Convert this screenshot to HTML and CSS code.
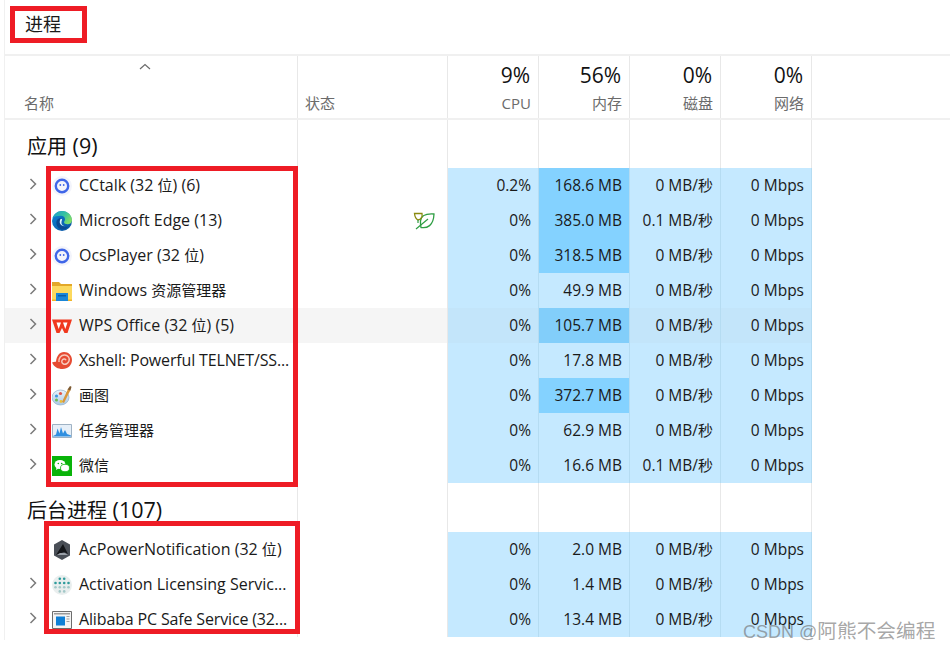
FILE: index.html
```html
<!DOCTYPE html>
<html lang="zh">
<head>
<meta charset="utf-8">
<title>进程</title>
<link rel="stylesheet" href="styles.css">
</head>
<body>
<svg class="defs" width="0" height="0" aria-hidden="true">
  <defs>
    <linearGradient id="edgeTop" x1="0" y1="0" x2="1" y2=".5"><stop offset="0" stop-color="#1c9bd0"/><stop offset=".6" stop-color="#35c3a0"/><stop offset="1" stop-color="#7ddc6a"/></linearGradient>
    <linearGradient id="edgeLow" x1="0" y1="0" x2="1" y2="1"><stop offset="0" stop-color="#0f86d6"/><stop offset="1" stop-color="#0a4f9e"/></linearGradient>
    <linearGradient id="paintBody" x1="0" y1="0" x2="0" y2="1"><stop offset="0" stop-color="#eaf3fb"/><stop offset="1" stop-color="#a9c9e6"/></linearGradient>
    <symbol id="cc" viewBox="0 0 20 20"><circle cx="10" cy="10" r="10" fill="#f3f4fb"/><circle cx="10" cy="10" r="6.200" fill="none" stroke="#3f66e8" stroke-width="2.400"/><circle cx="8.300" cy="9" r=".9" fill="#3f66e8"/><circle cx="11.700" cy="9" r=".9" fill="#3f66e8"/></symbol>
    <symbol id="chev" viewBox="0 0 8 12"><path d="M1.500 1l5 5-5 5"/></symbol>
  </defs>
</svg>
<div class="app">
  <h1 class="title">进程</h1>
  <div class="table">
    <div class="row head">
      <div class="cell name-h"><svg class="sort" viewBox="0 0 12 7"><path d="M1 6l5-4.500L11 6"/></svg><span class="zh">名称</span></div>
      <div class="cell status-h"><span class="zh">状态</span></div>
      <div class="cell metric"><b>9%</b><span>CPU</span></div>
      <div class="cell metric"><b>56%</b><span class="zh">内存</span></div>
      <div class="cell metric"><b>0%</b><span class="zh">磁盘</span></div>
      <div class="cell metric"><b>0%</b><span class="zh">网络</span></div>
    </div>

    <div class="row group first"><div class="cell name"><span class="group-label"><span class="zh">应用</span> (9)</span></div><div class="cell"></div><div class="cell"></div><div class="cell"></div><div class="cell"></div><div class="cell"></div></div>

    <div class="row proc">
      <div class="cell name"><svg class="chev"><use href="#chev"/></svg>
        <svg class="icon"><use href="#cc"/></svg>
        <span class="label">CCtalk (32 <span class="zh">位</span>) (6)</span></div>
      <div class="cell"></div><div class="cell num heat">0.2%</div><div class="cell num heat hot">168.6 MB</div><div class="cell num heat">0 MB/<span class="zh">秒</span></div><div class="cell num heat">0 Mbps</div>
    </div>
    <div class="row proc">
      <div class="cell name"><svg class="chev"><use href="#chev"/></svg>
        <svg class="icon" viewBox="0 0 20 20"><circle cx="10" cy="10" r="10" fill="url(#edgeLow)"/><path d="M.6 7C2 2.800 5.700 0 10 0c6 0 10 4.300 10 9.500 0 2.300-2 3.700-4.500 3.700-2 0-3.500-.8-3.500-2 0-1 1-1.400 1-2.900C13 6 11.300 4.800 9 4.800 5.500 4.800 2 5.500.6 7z" fill="url(#edgeTop)"/><path d="M8.500 7c-3 .3-4.500 3-4 6 .5 3 3 5.500 6 5.500 2.500 0 4.500-1.300 5.500-3-3 .8-6 .2-7-2-1-2-.5-4.700-.5-6.500z" fill="#0a4a94"/><path d="M8.500 8c-1 2-1.200 4 .2 5.600 1 1 2.500 1.500 4 1.600-2.500-.6-3.700-2.600-3.200-4.500.2-1 .7-1.800.5-2.700z" fill="#dff3fb"/></svg>
        <span class="label">Microsoft Edge (13)</span></div>
      <div class="cell status"><svg class="leaf" viewBox="0 0 22 18"><path d="M8 15.500C14 16.500 20.500 14 21 2 14 1.500 8 3 7.500 9c-.1 2 0 4.500.5 6.500z" fill="none" stroke="#2f9e44" stroke-width="1.300"/><path d="M1.500 1.500H9c.5 3-.5 6-4 6.500-2-1-3.200-3.500-3.500-6.500z" fill="none" stroke="#8a8a10" stroke-width="1.300"/><path d="M3 17L15 7M5 8v3" fill="none" stroke="#2f9e44" stroke-width="1.200"/></svg></div>
      <div class="cell num heat">0%</div><div class="cell num heat hot">385.0 MB</div><div class="cell num heat">0.1 MB/<span class="zh">秒</span></div><div class="cell num heat">0 Mbps</div>
    </div>
    <div class="row proc">
      <div class="cell name"><svg class="chev"><use href="#chev"/></svg>
        <svg class="icon"><use href="#cc"/></svg>
        <span class="label">OcsPlayer (32 <span class="zh">位</span>)</span></div>
      <div class="cell"></div><div class="cell num heat">0%</div><div class="cell num heat hot">318.5 MB</div><div class="cell num heat">0 MB/<span class="zh">秒</span></div><div class="cell num heat">0 Mbps</div>
    </div>
    <div class="row proc">
      <div class="cell name"><svg class="chev"><use href="#chev"/></svg>
        <svg class="icon" viewBox="0 0 20 20"><path d="M0 1h7l2 2h11v4H0z" fill="#e3a828"/><path d="M0 5h20v15H0z" fill="#fcd95e"/><path d="M0 18.500h20V20H0z" fill="#f0b429"/><path d="M4 12h12v8H4z" fill="#1a86d8"/><path d="M6 14h8v1.500H6z" fill="#0b5ea8"/></svg>
        <span class="label">Windows <span class="zh">资源管理器</span></span></div>
      <div class="cell"></div><div class="cell num heat">0%</div><div class="cell num heat">49.9 MB</div><div class="cell num heat">0 MB/<span class="zh">秒</span></div><div class="cell num heat">0 Mbps</div>
    </div>
    <div class="row proc hover">
      <div class="cell name"><svg class="chev"><use href="#chev"/></svg>
        <svg class="icon" viewBox="0 0 20 20"><path d="M0 3.500h20L15.500 17H12.500L10 12l-2.500 5H4.500z" fill="#f0381e"/><path d="M4.500 6.500L6.700 13 9 6.500zM11 6.500L13.300 13 15.500 6.500z" fill="#fff"/></svg>
        <span class="label">WPS Office (32 <span class="zh">位</span>) (5)</span></div>
      <div class="cell"></div><div class="cell num heat">0%</div><div class="cell num heat hot">105.7 MB</div><div class="cell num heat">0 MB/<span class="zh">秒</span></div><div class="cell num heat">0 Mbps</div>
    </div>
    <div class="row proc">
      <div class="cell name"><svg class="chev"><use href="#chev"/></svg>
        <svg class="icon" viewBox="0 0 20 20"><path d="M0 11.500c1.500-.8 3-1 4-.8C4.500 5 7.500 1 12 1c4.500 0 8 3.500 8 8 0 5-4 9-9.500 9C6 18 2 16 0 11.500z" fill="#e64b32"/><path d="M7 11c-.5-4 2-7 5.500-7S18 7 17 10c-.8 2.500-3.500 3.800-5.500 3-1.800-.7-2.300-3-1-4.300 1-1 3-.8 3.500.5" fill="none" stroke="#f8c9bb" stroke-width="1.500"/></svg>
        <span class="label tight">Xshell: Powerful TELNET/SS...</span></div>
      <div class="cell"></div><div class="cell num heat">0%</div><div class="cell num heat">17.8 MB</div><div class="cell num heat">0 MB/<span class="zh">秒</span></div><div class="cell num heat">0 Mbps</div>
    </div>
    <div class="row proc">
      <div class="cell name"><svg class="chev"><use href="#chev"/></svg>
        <svg class="icon" viewBox="0 0 20 20"><ellipse cx="8.500" cy="11.500" rx="8.500" ry="7.500" fill="url(#paintBody)" stroke="#8fb0cc" stroke-width=".7"/><circle cx="4.500" cy="10" r="1.600" fill="#3f9adf"/><circle cx="8.500" cy="7.500" r="1.600" fill="#e0574a"/><circle cx="4.500" cy="14" r="1.500" fill="#6cbb4e"/><circle cx="9" cy="15.500" r="1.400" fill="#e9c23c"/><path d="M10 16L16 3l2.500 1L12 17z" fill="#d9963a"/><path d="M15.500 3.500L18 0l1.500.7L18.500 4.500z" fill="#7d5a32"/></svg>
        <span class="label"><span class="zh">画图</span></span></div>
      <div class="cell"></div><div class="cell num heat">0%</div><div class="cell num heat hot">372.7 MB</div><div class="cell num heat">0 MB/<span class="zh">秒</span></div><div class="cell num heat">0 Mbps</div>
    </div>
    <div class="row proc">
      <div class="cell name"><svg class="chev"><use href="#chev"/></svg>
        <svg class="icon" viewBox="0 0 20 20"><path d="M.5 3.500h19v13H.5z" fill="#e6eff8" stroke="#9fb2c4"/><path d="M1 15l3-1.500 1.500-6 2 5L9 6l2 6.500 2-3.500 2 4 4 1.500v1H1z" fill="#2f8fe0"/></svg>
        <span class="label"><span class="zh">任务管理器</span></span></div>
      <div class="cell"></div><div class="cell num heat">0%</div><div class="cell num heat">62.9 MB</div><div class="cell num heat">0 MB/<span class="zh">秒</span></div><div class="cell num heat">0 Mbps</div>
    </div>
    <div class="row proc">
      <div class="cell name"><svg class="chev"><use href="#chev"/></svg>
        <svg class="icon" viewBox="0 0 20 20"><path d="M0 0h20v20H0z" fill="#09b309"/><ellipse cx="8" cy="8.500" rx="5.500" ry="4.500" fill="#fff"/><path d="M4.500 11.500L4 14l2.500-1.500z" fill="#fff"/><ellipse cx="13" cy="12" rx="4.500" ry="3.700" fill="#fff" stroke="#09b309" stroke-width=".8"/><circle cx="6.300" cy="7.500" r=".8" fill="#09b309"/><circle cx="9.700" cy="7.500" r=".8" fill="#09b309"/></svg>
        <span class="label"><span class="zh">微信</span></span></div>
      <div class="cell"></div><div class="cell num heat">0%</div><div class="cell num heat">16.6 MB</div><div class="cell num heat">0.1 MB/<span class="zh">秒</span></div><div class="cell num heat">0 Mbps</div>
    </div>

    <div class="row group"><div class="cell name"><span class="group-label"><span class="zh">后台进程</span> (107)</span></div><div class="cell"></div><div class="cell"></div><div class="cell"></div><div class="cell"></div><div class="cell"></div></div>

    <div class="row proc">
      <div class="cell name"><span class="chev-space"></span>
        <svg class="icon" viewBox="0 0 20 20"><path d="M10 0l8 4.500v11L10 20l-8-4.500v-11z" fill="#4a4f57"/><path d="M4 15L11 4l5 10-4-2z" fill="#14161a"/><path d="M5 15h11l-3-2H8z" fill="#9aa0a8"/></svg>
        <span class="label">AcPowerNotification (32 <span class="zh">位</span>)</span></div>
      <div class="cell"></div><div class="cell num heat">0%</div><div class="cell num heat">2.0 MB</div><div class="cell num heat">0 MB/<span class="zh">秒</span></div><div class="cell num heat">0 Mbps</div>
    </div>
    <div class="row proc">
      <div class="cell name"><svg class="chev"><use href="#chev"/></svg>
        <svg class="icon" viewBox="0 0 20 20"><circle cx="10" cy="10" r="10" fill="#e9eeee"/><g fill="#2f9c9c"><circle cx="7.800" cy="3.800" r="1.300"/><circle cx="12.200" cy="3.800" r="1.300"/><circle cx="3.500" cy="8" r="1.300"/><circle cx="7.800" cy="8" r="1.300"/><circle cx="12.200" cy="8" r="1.300"/><circle cx="16.500" cy="8" r="1.300"/></g><g fill="#a3c8c8"><circle cx="3.500" cy="12.200" r="1.300"/><circle cx="7.800" cy="12.200" r="1.300"/><circle cx="12.200" cy="12.200" r="1.300"/><circle cx="16.500" cy="12.200" r="1.300"/><circle cx="7.800" cy="16.400" r="1.300"/><circle cx="12.200" cy="16.400" r="1.300"/></g></svg>
        <span class="label">Activation Licensing Servic...</span></div>
      <div class="cell"></div><div class="cell num heat">0%</div><div class="cell num heat">1.4 MB</div><div class="cell num heat">0 MB/<span class="zh">秒</span></div><div class="cell num heat">0 Mbps</div>
    </div>
    <div class="row proc">
      <div class="cell name"><svg class="chev"><use href="#chev"/></svg>
        <svg class="icon" viewBox="0 0 20 20"><path d="M.5 1.500h19v17H.5z" fill="#f4f4f4" stroke="#6d6d6d"/><path d="M2 3h16v1.500H2z" fill="#9a9a9a"/><path d="M4 6.500h9v9H4z" fill="#0e7fd6"/><path d="M14.500 6.500h3M14.500 9h3M14.500 11.500h3" stroke="#a0a0a0"/></svg>
        <span class="label tight">Alibaba PC Safe Service (32...</span></div>
      <div class="cell"></div><div class="cell num heat">0%</div><div class="cell num heat">13.4 MB</div><div class="cell num heat">0 MB/<span class="zh">秒</span></div><div class="cell num heat">0 Mbps</div>
    </div>
  </div>
</div>
<div class="mark mark-title"></div>
<div class="mark mark-apps"></div>
<div class="mark mark-bg"></div>
<div class="watermark">CSDN @<span class="wm-zh">阿熊不会编程</span></div>
</body>
</html>
```
FILE: styles.css
```css
* { box-sizing: border-box; }
html, body { margin: 0; height: 100%; background: #fff; overflow: hidden; }
body {
  position: relative;
  font-family: "Open Sans", "Noto Sans CJK SC", sans-serif;
  font-size: 16px;
  color: #1a1a1a;
}
.defs { position: absolute; }
.zh { font-family: "Noto Sans CJK SC", sans-serif; font-size: 15px; line-height: 1; }
.app { margin-left: 4px; border-left: 1px solid #f0f0f0; height: 640px; overflow: hidden; }
.title {
  margin: 0;
  height: 56px;
  padding: 11px 0 0 20px;
  font-family: "Noto Sans CJK SC", sans-serif;
  font-size: 18px;
  font-weight: 400;
  line-height: 25px;
  border-bottom: 2px solid #f0f0f0;
}
.row {
  display: grid;
  grid-template-columns: 293px 150px 91px 91px 91px 91px;
}
.cell { border-right: 1px solid #e8e8e8; min-width: 0; }
.head { height: 64px; border-bottom: 2px solid #f0f0f0; }
.head .cell { position: relative; display: flex; flex-direction: column; justify-content: flex-end; padding-bottom: 5px; color: #6b6b6b; font-size: 15px; line-height: 20px; }
.head .zh { line-height: 20px; }
.name-h { padding-left: 19px; }
.status-h { padding-left: 7px; }
.sort { position: absolute; top: 7px; left: 134px; width: 12px; height: 7px; fill: none; stroke: #6b6b6b; stroke-width: 1.2; }
.head .metric { align-items: flex-end; padding-right: 7px; }
.metric b { font-weight: 400; font-size: 21px; line-height: 28px; color: #111; margin: 0 1px 4px 0; }
.group { height: 49px; }
.group.first { height: 48px; }
.group .name { padding: 14px 0 0 22px; }
.group.first .name { padding-top: 13px; }
.group-label { font-size: 21.5px; line-height: 26px; color: #111; }
.group-label .zh { font-size: 20px; }
.proc { height: 35px; line-height: 35px; }
.proc .name { display: flex; align-items: center; padding-left: 24px; }
.chev { width: 8px; height: 12px; margin-top: -3px; fill: none; stroke: #7a7a7a; stroke-width: 1.5; flex: none; }
.chev-space { width: 8px; flex: none; }
.icon { width: 20px; height: 20px; margin-left: 15px; flex: none; }
.label { margin-left: 7px; flex: none; white-space: nowrap; margin-top: -1px; }
.tight { letter-spacing: -.15px; }
.status { display: flex; align-items: center; justify-content: flex-end; padding-right: 12px; }
.leaf { width: 22px; height: 18px; }
.num { text-align: right; padding-right: 7px; white-space: nowrap; font-size: 15.5px; }
.heat { background: #c5e9ff; border-right-color: #b5dcf2; }
.hot { background: #84d2ff; }
.hover .name, .hover .cell:nth-child(2) { background: #f5f5f5; }
.hover .heat { background: #c3e5fa; }
.hover .hot { background: #82cefa; }
.mark { position: absolute; border: 5px solid #ee1c25; }
.mark-title { left: 10px; top: 6px; width: 77px; height: 37px; }
.mark-apps { left: 46px; top: 166px; width: 252px; height: 321px; }
.mark-bg { left: 44px; top: 521px; width: 256px; height: 113px; }
.watermark { position: absolute; left: 743px; top: 619px; font-family: "Liberation Sans", "Noto Sans CJK SC", sans-serif; font-size: 18px; line-height: 26px; color: rgba(110,110,110,.62); white-space: nowrap; }
.wm-zh { font-family: "Noto Sans CJK SC", sans-serif; font-size: 19.7px; line-height: 1; }
```
